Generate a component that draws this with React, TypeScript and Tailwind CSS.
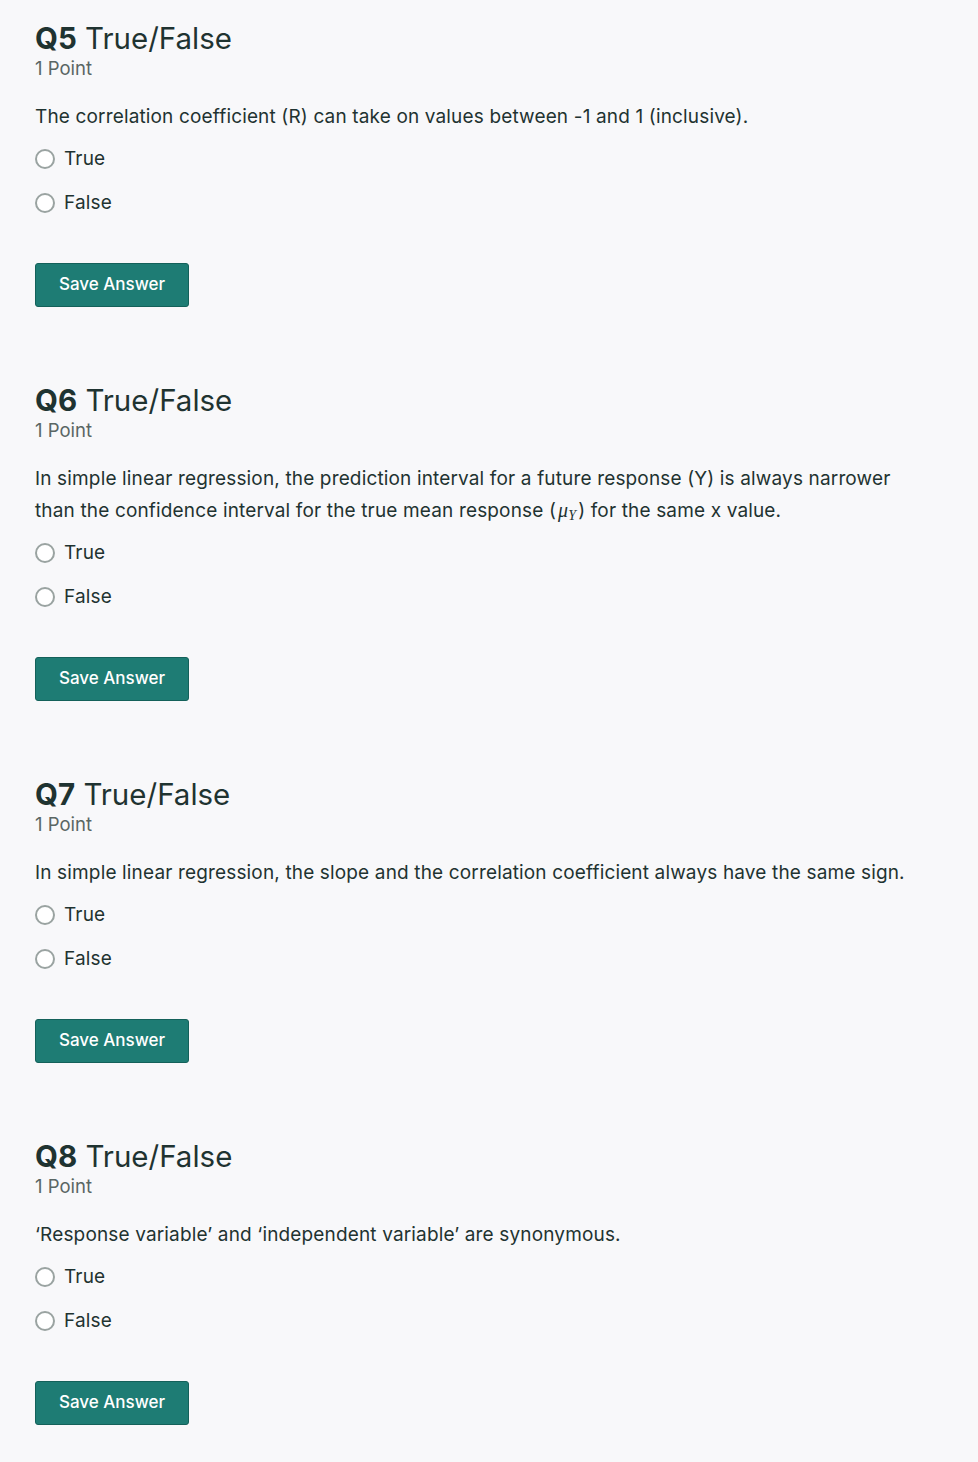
import React from "react";

type Q = { n: string; text: React.ReactNode };

const questions: Q[] = [
  { n: "Q5", text: "The correlation coefficient (R) can take on values between -1 and 1 (inclusive)." },
  {
    n: "Q6",
    text: (
      <>
        In simple linear regression, the prediction interval for a future response (Y) is always narrower than the
        confidence interval for the true mean response (
        <span className="mx-[2px] italic leading-none" style={{ fontFamily: "'Liberation Serif', serif" }}>
          <span className="text-[20px] leading-none">μ</span>
          <span className="align-[-3px] text-[14px] leading-none">Y</span>
        </span>
        ) for the same x value.
      </>
    ),
  },
  { n: "Q7", text: "In simple linear regression, the slope and the correlation coefficient always have the same sign." },
  { n: "Q8", text: "‘Response variable’ and ‘independent variable’ are synonymous." },
];

function Radio({ label }: { label: string }) {
  return (
    <label className="flex h-[44px] items-center gap-[9px]">
      <span className="block h-[20px] w-[20px] rounded-full border-2 border-[#9aa3a1] bg-white" />
      <span className="text-[19px] tracking-[0.15px] text-[#1f3331]">{label}</span>
    </label>
  );
}

export default function App() {
  return (
    <div
      className="min-h-[1462px] bg-[#f8f8fa] pl-[35px] pr-[40px] pt-[20px] pb-[37px] text-[#1f3331]"
      style={{ fontFamily: "Inter, 'Noto Sans', sans-serif" }}
    >
      {questions.map((q, i) => (
        <section key={q.n} className={i === 0 ? "" : "mt-[75px]"}>
          <h2 className="h-[36px] text-[29.5px] leading-[36px] text-[#1f3331]">
            <span className="font-bold">{q.n}</span> True/False
          </h2>
          <div className="text-[18.5px] leading-[24px] text-[#5a6664]">1 Point</div>
          <p className="mt-[21px] max-w-[890px] text-[19px] leading-[32px] tracking-[0.15px]">{q.text}</p>
          <div className="mt-[4px] flex flex-col">
            <Radio label="True" />
            <Radio label="False" />
          </div>
          <button className="mt-[38px] h-[44px] w-[154px] rounded-[3px] border border-[#14615a] bg-[#1e7c74] text-[17px] font-medium text-white">
            Save Answer
          </button>
        </section>
      ))}
    </div>
  );
}
